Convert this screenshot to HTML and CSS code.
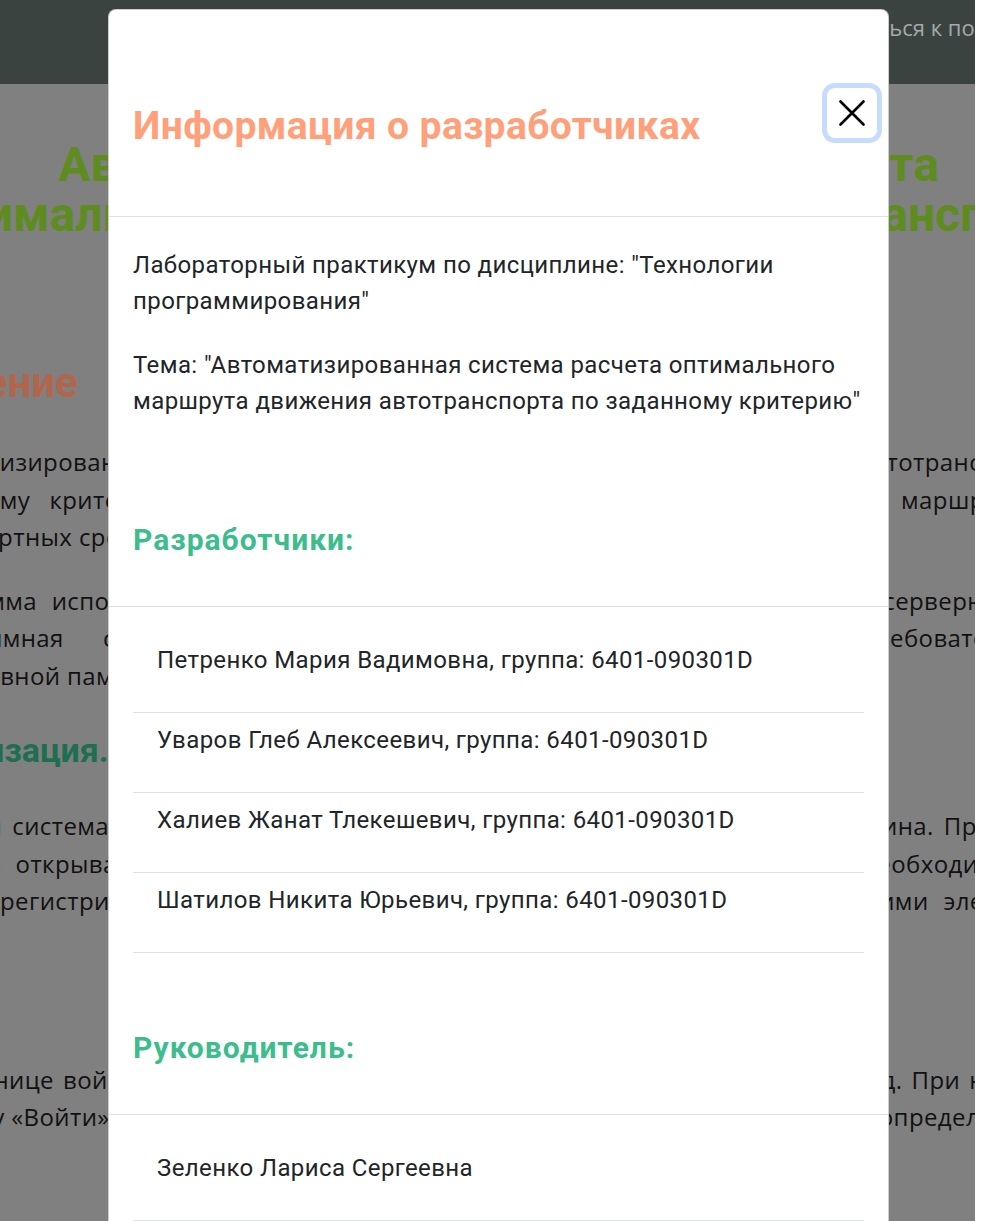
FILE: index.html
```
<!DOCTYPE html>
<html lang="ru">
<head>
<meta charset="utf-8">
<title>Информация о разработчиках</title>
<link rel="stylesheet" href="styles.css">
</head>
<body>
<div class="screen">
  <div class="page">
    <nav class="topbar">
      <span class="brand">Маршрут</span>
      <a class="nav-link" href="#">Вернуться к поиску маршрута</a>
    </nav>
    <main class="content">
      <h1 class="title">Автоматизированная система расчета<br>оптимального маршрута движения автотранспорта</h1>
      <h2 class="sec-intro">Введение</h2>
      <p class="para p1">
        <span class="ln">Автоматизированная система расчета оптимального маршрута движения автотранспорта по</span>
        <span class="ln">заданному критерию позволяет выбрать наиболее выгодный вариант по маршрутизации</span>
        <span class="ln last">транспортных средств в городе.</span>
      </p>
      <p class="para p2">
        <span class="ln">Программа использует трехзвенную архитектуру и включает клиентскую и серверную часть</span>
        <span class="ln">программная система работает в браузере и не слишком требовательна к</span>
        <span class="ln last">оперативной памяти и дисковому пространству.</span>
      </p>
      <h2 class="sec-auth">Авторизация.</h2>
      <p class="para p3">
        <span class="ln">Текущая система требует авторизации пользователя с помощью пароля и логина. При входе в</span>
        <span class="ln">системы открывается форма авторизации, в которой пользователю будет необходимо войти</span>
        <span class="ln">либо зарегистрироваться, а затем воспользоваться доступными управляющими элементами.</span>
      </p>
      <p class="para p4">
        <span class="ln">На странице войти необходимо заполнить все поля формы и подтвердить ввод. При неверном,</span>
        <span class="ln last">клавишу «Войти», после чего система проверит введенные данные и отобразит определенную страницу.</span>
      </p>
    </main>
  </div>

  <div class="modal-layer">
    <div class="modal">
      <div class="modal-header main-header">
        <h5 class="modal-title">Информация о разработчиках</h5>
        <button class="btn-close" type="button" aria-label="Закрыть">
          <svg width="26" height="26" viewBox="0 0 26 26"><path d="M1.5 1.5 L24.5 24.5 M24.5 1.5 L1.5 24.5" stroke="#000" stroke-width="2.6" stroke-linecap="round" fill="none"/></svg>
        </button>
      </div>
      <div class="modal-body intro-body">
        <p>Лабораторный практикум по дисциплине: "Технологии программирования"</p>
        <p>Тема: "Автоматизированная система расчета оптимального маршрута движения автотранспорта по заданному критерию"</p>
      </div>
      <div class="modal-header section-header">
        <h4 class="section-title">Разработчики:</h4>
      </div>
      <div class="modal-body list-body">
        <ul class="list">
          <li class="list-item"><p>Петренко Мария Вадимовна, группа: 6401-090301D</p></li>
          <li class="list-item"><p>Уваров Глеб Алексеевич, группа: 6401-090301D</p></li>
          <li class="list-item"><p>Халиев Жанат Тлекешевич, группа: 6401-090301D</p></li>
          <li class="list-item"><p>Шатилов Никита Юрьевич, группа: 6401-090301D</p></li>
        </ul>
      </div>
      <div class="modal-header section-header">
        <h4 class="section-title">Руководитель:</h4>
      </div>
      <div class="modal-body list-body">
        <ul class="list">
          <li class="list-item"><p>Зеленко Лариса Сергеевна</p></li>
        </ul>
      </div>
    </div>
  </div>
</div>
</body>
</html>
```
FILE: styles.css
```
* { box-sizing: border-box; }

html, body {
  margin: 0;
  padding: 0;
  background: #ffffff;
}

.screen {
  position: relative;
  width: 975px;
  height: 1221px;
  overflow: hidden;
  background: #808080;
}

/* ---------- dimmed background page ---------- */
.page {
  width: 975px;
}

.topbar {
  height: 84px;
  background: #3b4341;
  display: flex;
  align-items: flex-start;
  padding: 12px 0 0 140px;
  font-family: "Open Sans", sans-serif;
  font-size: 22px;
  white-space: nowrap;
}

.brand {
  width: 674px;
  flex: none;
  color: #a6aaa9;
}

.nav-link {
  color: #a6aaa9;
  text-decoration: none;
  flex: none;
}

.content {
  margin-left: -100px;
  width: 1197px;
  padding-top: 56px;
  font-family: "Open Sans", sans-serif;
  color: #111111;
}

.title {
  margin: 0;
  font-family: Roboto, sans-serif;
  font-weight: 700;
  font-size: 48px;
  line-height: 50px;
  text-align: center;
  color: #5e8c1e;
  white-space: nowrap;
}

.sec-intro,
.sec-auth {
  margin: 0;
  font-family: Roboto, sans-serif;
  font-weight: 700;
  line-height: 44px;
  white-space: nowrap;
}

.sec-intro {
  margin: 121px 0 0 -15px;
  font-size: 42px;
  color: #b0664c;
}

.sec-auth {
  margin: 34px 0 0 -12px;
  font-size: 34px;
  color: #1e6e50;
}

.para {
  margin: 0;
  font-size: 24px;
  line-height: 37.5px;
  letter-spacing: 0.4px;
}

.p1 { margin-top: 38px; }
.p2 { margin-top: 26px; }
.p3 { margin-top: 35px; }
.p4 { margin-top: 141px; }

.ln {
  display: block;
  white-space: nowrap;
  text-align: justify;
  text-align-last: justify;
}

.ln.last {
  text-align-last: left;
}

/* ---------- modal ---------- */
.modal-layer {
  position: absolute;
  top: 0;
  left: 0;
  right: 0;
  bottom: 0;
  padding: 9px 0 0 108px;
}

.modal {
  width: 781px;
  background: #ffffff;
  border: 1px solid rgba(0, 0, 0, 0.2);
  border-radius: 8px;
  font-family: Roboto, "Noto Sans", sans-serif;
  color: #212529;
}

.modal-header {
  display: flex;
  justify-content: space-between;
  align-items: flex-start;
  border-bottom: 1px solid #dee2e6;
}

.main-header {
  padding: 78px 11px 66px 24px;
}

.modal-title {
  margin: 15px 0 0 0;
  font-size: 39px;
  line-height: 47px;
  font-weight: 700;
  letter-spacing: 0.4px;
  color: #ffa07a;
}

.btn-close {
  width: 50px;
  height: 50px;
  padding: 0;
  border: 0;
  border-radius: 8px;
  background: #ffffff;
  box-shadow: 0 0 0 5px #c6dbfd;
  display: flex;
  align-items: center;
  justify-content: center;
}

.section-header {
  padding: 50px 24px 49px;
}

.section-title {
  margin: 0;
  font-size: 30px;
  line-height: 35px;
  font-weight: 700;
  letter-spacing: 1px;
  color: #3dbd8d;
}

.modal-body {
  font-size: 24px;
  line-height: 36px;
  letter-spacing: 0.4px;
}

.intro-body {
  padding: 30px 24px 25px;
}

.intro-body p {
  margin: 0 0 28px;
}

.list-body {
  padding: 26px 24px 27px;
}

.list {
  list-style: none;
  margin: 0;
  padding: 0;
}

.list-item {
  padding: 9px 24px 0;
  border-bottom: 1px solid #dee2e6;
}

.list-item p {
  margin: 0 0 34px;
}
```
